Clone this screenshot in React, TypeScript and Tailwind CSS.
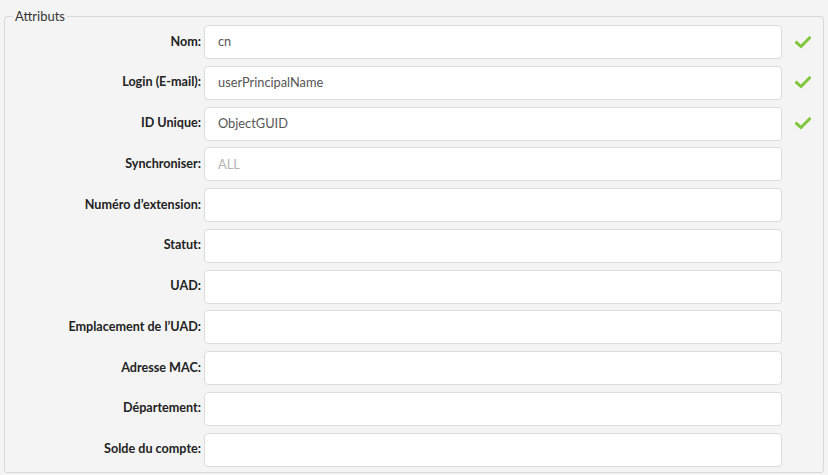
import React from 'react';

type Field = {
  label: string;
  value?: string;
  placeholder?: string;
  checked?: boolean;
};

const fields: Field[] = [
  { label: 'Nom:', value: 'cn', checked: true },
  { label: 'Login (E-mail):', value: 'userPrincipalName', checked: true },
  { label: 'ID Unique:', value: 'ObjectGUID', checked: true },
  { label: 'Synchroniser:', placeholder: 'ALL' },
  { label: 'Numéro d’extension:' },
  { label: 'Statut:' },
  { label: 'UAD:' },
  { label: 'Emplacement de l’UAD:' },
  { label: 'Adresse MAC:' },
  { label: 'Département:' },
  { label: 'Solde du compte:' },
];

const CheckMark: React.FC = () => (
  <svg width="16" height="13" viewBox="0 0 16 13" aria-hidden="true">
    <path
      d="M1.5 6.5 L6 10.5 L14.5 2"
      fill="none"
      stroke="#7ec63c"
      strokeWidth="3"
      strokeLinecap="square"
    />
  </svg>
);

export default function App() {
  return (
    <div
      className="w-[828px] h-[475px] bg-[#f4f4f4] pt-[9px] px-[4px] text-[#333]"
      style={{ fontFamily: 'Lato, "Open Sans", sans-serif' }}
    >
      <fieldset className="border border-[#d9d9d9] rounded-[3px] pl-0 pr-0 pb-[5px] pt-[2px] m-0">
        <legend className="ml-[8px] px-[2px] text-[13px] leading-[14px] text-[#333]">
          Attributs
        </legend>
        <div className="flex flex-col gap-[6.75px]">
          {fields.map((f) => (
            <div key={f.label} className="flex items-center">
              <label className="w-[199px] pr-[3px] text-right text-[12.6px] font-bold text-[#222] whitespace-nowrap">
                {f.label}
              </label>
              <div className="w-[578px] h-[34px] bg-white border border-[#dcdcdc] rounded-[4px] flex items-center px-[13px] text-[12.8px]">
                {f.value ? (
                  <span className="text-[#555]">{f.value}</span>
                ) : f.placeholder ? (
                  <span className="text-[#b5b5b5]">{f.placeholder}</span>
                ) : null}
              </div>
              <div className="w-[41px] flex justify-center pl-[1px]">
                {f.checked && <CheckMark />}
              </div>
            </div>
          ))}
        </div>
      </fieldset>
    </div>
  );
}
